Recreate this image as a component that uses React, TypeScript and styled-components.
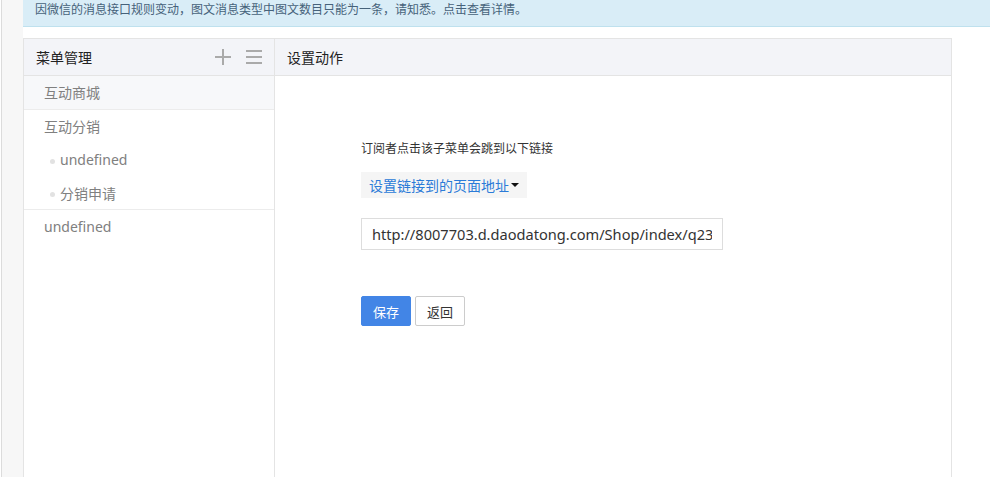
import * as React from "react";
import styled, { createGlobalStyle } from "styled-components";

const GlobalStyle = createGlobalStyle`
  html, body {
    margin: 0;
    padding: 0;
    height: 100%;
    overflow: hidden;
    background: #fff;
  }
  body {
    font-family: "Noto Sans", "Noto Sans CJK SC", sans-serif;
    color: #333;
  }
  #root {
    height: 100%;
  }
`;

const Page = styled.div`
  display: flex;
  height: 100%;
`;

const Gutter = styled.div`
  width: 21px;
  margin-left: 1px;
  flex-shrink: 0;
  background: #f7f7f7;
  border-left: 1px solid #dcdcdc;
`;

const Main = styled.div`
  flex: 1;
  display: flex;
  flex-direction: column;
  min-width: 0;
`;

const Alert = styled.div`
  height: 26px;
  padding: 0 12px;
  background: #d9edf7;
  border-bottom: 1px solid #bfe1ee;
  font-size: 12px;
  line-height: 18px;
  color: #46627a;
  white-space: nowrap;
  font-family: "Noto Sans CJK SC", sans-serif;
`;

const Panel = styled.div`
  margin-top: 11px;
  width: 927px;
  flex: 1;
  display: grid;
  grid-template-columns: 251px 1fr;
  grid-template-rows: 37px 1fr;
  border: 1px solid #e4e4e4;
  border-bottom: none;
`;

const HeaderCell = styled.div<{ $divider?: boolean }>`
  display: flex;
  align-items: center;
  justify-content: space-between;
  padding: 0 12px;
  background: #f3f4f8;
  border-bottom: 1px solid #e4e4e4;
  border-right: ${(p) => (p.$divider ? "1px solid #e4e4e4" : "none")};
  font-size: 14px;
  color: #222;
  font-family: "Noto Sans CJK SC", sans-serif;
`;

const HeaderTools = styled.div`
  display: flex;
  align-items: center;
  gap: 15px;
  margin-right: 0;
`;

const Sidebar = styled.div`
  border-right: 1px solid #e4e4e4;
`;

const MenuGroup = styled.div`
  border-bottom: 1px solid #ececec;
`;

const MenuItem = styled.div<{ $active?: boolean }>`
  height: 33px;
  line-height: 33px;
  padding-left: 20px;
  font-size: 14px;
  color: #808080;
  background: ${(p) => (p.$active ? "#f7f8fa" : "transparent")};
`;

const SubItem = styled.div`
  display: flex;
  align-items: center;
  height: 33px;
  padding-left: 26px;
  font-size: 14px;
  color: #808080;

  &::before {
    content: "";
    width: 5px;
    height: 5px;
    border-radius: 50%;
    background: #e2e2e2;
    margin: 4px 5px 0 0;
  }
`;

const Content = styled.div`
  padding: 63px 0 0 86px;
`;

const Hint = styled.div`
  font-size: 12px;
  color: #333;
  line-height: 18px;
  font-family: "Noto Sans CJK SC", sans-serif;
`;

const LinkDropdown = styled.button`
  display: inline-flex;
  align-items: center;
  gap: 2px;
  margin-top: 15px;
  height: 26px;
  padding: 0 8px;
  border: none;
  background: #f5f5f5;
  color: #2b7bd8;
  font-size: 14px;
  font-family: "Noto Sans CJK SC", sans-serif;
  cursor: pointer;

  &::after {
    content: "";
    border-left: 4px solid transparent;
    border-right: 4px solid transparent;
    border-top: 4px solid #111;
  }
`;

const UrlInput = styled.input`
  display: block;
  box-sizing: border-box;
  margin-top: 20px;
  width: 362px;
  height: 32px;
  padding: 0 10px;
  border: 1px solid #ddd;
  font-size: 14.6px;
  color: #333;
  font-family: "Noto Sans", sans-serif;
  outline: none;
`;

const Actions = styled.div`
  display: flex;
  gap: 4px;
  margin-top: 46px;
`;

const Button = styled.button<{ $primary?: boolean }>`
  width: 50px;
  height: 30px;
  border-radius: 2px;
  border: 1px solid ${(p) => (p.$primary ? "#4285e6" : "#ccc")};
  background: ${(p) => (p.$primary ? "#4285e6" : "#fff")};
  color: ${(p) => (p.$primary ? "#fff" : "#333")};
  font-size: 13px;
  font-family: "Noto Sans CJK SC", sans-serif;
  cursor: pointer;
`;

const PlusIcon = () => (
  <svg width="16" height="16" viewBox="0 0 16 16">
    <path d="M8 0v16M0 8h16" stroke="#aaa" strokeWidth="2" />
  </svg>
);

const ListIcon = () => (
  <svg width="16" height="16" viewBox="0 0 16 16">
    <path d="M0 2h16M0 8h16M0 14h16" stroke="#aaa" strokeWidth="2" />
  </svg>
);

export default function App() {
  return (
    <Page>
      <GlobalStyle />
      <Gutter />
      <Main>
        <Alert>因微信的消息接口规则变动，图文消息类型中图文数目只能为一条，请知悉。点击查看详情。</Alert>
        <Panel>
          <HeaderCell $divider>
            <span>菜单管理</span>
            <HeaderTools>
              <PlusIcon />
              <ListIcon />
            </HeaderTools>
          </HeaderCell>
          <HeaderCell>
            <span>设置动作</span>
          </HeaderCell>
          <Sidebar>
            <MenuGroup>
              <MenuItem $active>互动商城</MenuItem>
            </MenuGroup>
            <MenuGroup>
              <MenuItem>互动分销</MenuItem>
              <SubItem>undefined</SubItem>
              <SubItem>分销申请</SubItem>
            </MenuGroup>
            <MenuItem>undefined</MenuItem>
          </Sidebar>
          <Content>
            <Hint>订阅者点击该子菜单会跳到以下链接</Hint>
            <LinkDropdown>设置链接到的页面地址</LinkDropdown>
            <UrlInput readOnly value="http://8007703.d.daodatong.com/Shop/index/q23000" />
            <Actions>
              <Button $primary>保存</Button>
              <Button>返回</Button>
            </Actions>
          </Content>
        </Panel>
      </Main>
    </Page>
  );
}
